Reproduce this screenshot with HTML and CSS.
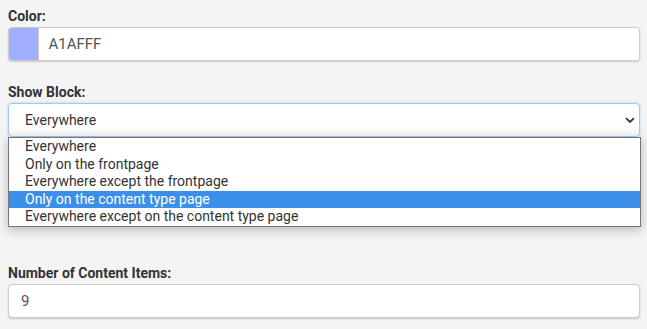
FILE: index.html
```html
<!DOCTYPE html>
<html lang="en">
<head>
    <meta charset="UTF-8">
    <meta name="viewport" content="width=device-width, initial-scale=1.0">
    <title>Block Settings</title>
    <link rel="stylesheet" href="styles.css">
</head>
<body>

    <form class="settings">
        <div class="form-group">
            <label for="color">Color:</label>
            <div class="color-field">
                <span class="swatch"></span>
                <input type="text" id="color" name="color" value="A1AFFF">
            </div>
        </div>

        <div class="form-group open">
            <label for="show_block">Show Block:</label>
            <div class="select-wrap">
                <div class="select" id="show_block">
                    <span>Everywhere</span>
                    <svg class="chevron" width="10" height="7" viewBox="0 0 10 7">
                        <path d="M1 1.2 L5 5 L9 1.2" fill="none" stroke="#333" stroke-width="1.8"/>
                    </svg>
                </div>
                <ul class="options">
                    <li>Everywhere</li>
                    <li>Only on the frontpage</li>
                    <li>Everywhere except the frontpage</li>
                    <li class="active">Only on the content type page</li>
                    <li>Everywhere except on the content type page</li>
                </ul>
            </div>
        </div>

        <div class="form-group">
            <label for="items">Number of Content Items:</label>
            <input type="text" id="items" name="items" value="9">
        </div>
    </form>

</body>
</html>
```

FILE: styles.css
```css
body {
    margin: 0;
    padding: 6px 7px 0 8px;
    background: #f4f4f4;
    font-family: Roboto, 'Liberation Sans', sans-serif;
    font-size: 14px;
    color: #333;
}

.form-group {
    margin-bottom: 21px;
}

.form-group.open {
    margin-bottom: 126px;
}

label {
    display: block;
    font-weight: bold;
    line-height: 20px;
    margin-bottom: 1px;
    color: #333;
}

input {
    display: block;
    width: 100%;
    box-sizing: border-box;
    height: 34px;
    padding: 0 12px;
    border: 1px solid #ccc;
    border-radius: 4px;
    background: #fff;
    box-shadow: 0 1px 2px rgba(0, 0, 0, 0.18);
    font-family: inherit;
    font-size: 15px;
    color: #555;
}

.color-field {
    display: flex;
    height: 34px;
    border: 1px solid #ccc;
    border-radius: 4px;
    background: #fff;
    box-shadow: 0 1px 2px rgba(0, 0, 0, 0.18);
    box-sizing: border-box;
    overflow: hidden;
}

.swatch {
    width: 31px;
    background: #a1afff;
    border-right: 1px solid #ccc;
}

.color-field input {
    height: 32px;
    border: none;
    box-shadow: none;
    padding-left: 9px;
    border-radius: 0;
}

.select-wrap {
    position: relative;
}

.select {
    display: flex;
    align-items: center;
    justify-content: space-between;
    height: 34px;
    box-sizing: border-box;
    padding: 0 4px 0 16px;
    border: 1px solid #9ec8ee;
    border-radius: 4px;
    background: linear-gradient(#fff 60%, #f7f7f7);
    box-shadow: 0 0 3px rgba(102, 170, 230, 0.45);
    font-size: 14px;
    color: #333;
}

.chevron {
    margin-top: 1px;
}

.options {
    position: absolute;
    top: 34px;
    left: 0;
    right: -1px;
    margin: 0;
    padding: 0;
    list-style: none;
    background: #fff;
    border: 1px solid #767676;
    box-shadow: 0 3px 10px rgba(0, 0, 0, 0.25);
    z-index: 2;
}

.options li {
    padding-left: 16px;
    line-height: 17.6px;
    font-size: 14px;
    color: #333;
}

.options li.active {
    background: #3b8fe9;
    color: #fff;
}
```
